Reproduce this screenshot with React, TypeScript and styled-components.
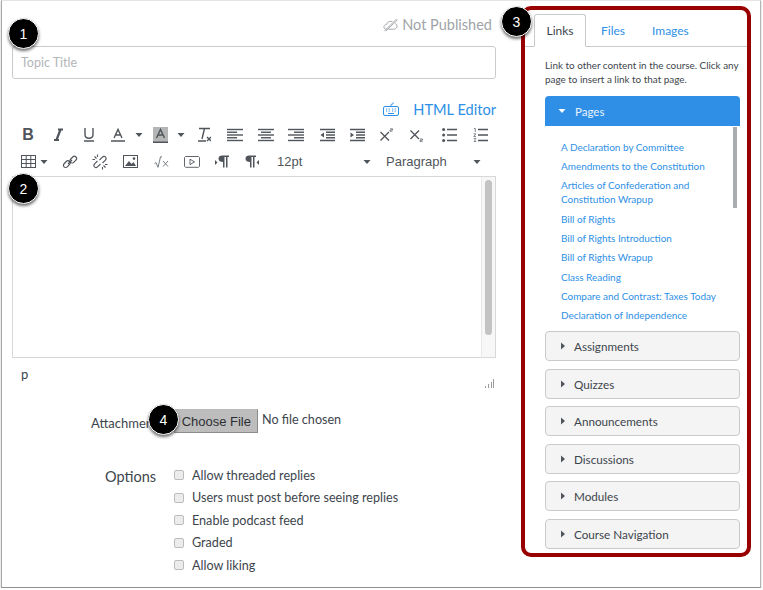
import React from 'react';
import styled, { createGlobalStyle } from 'styled-components';

const GlobalStyle = createGlobalStyle`
  html, body {
    margin: 0;
    padding: 0;
    background: #fff;
    font-family: Lato, "Open Sans", sans-serif;
  }
`;

const Shell = styled.div`
  position: relative;
  box-sizing: border-box;
  display: flex;
  width: 760px;
  height: 588px;
  margin-left: 1px;
  border-top: 1px solid #e4e4e4;
  border-left: 1px solid #a8a8a8;
  border-right: 1px solid #b4b4b4;
  border-bottom: 1px solid #8e8e8e;
  box-shadow: 0 1px 2px rgba(0, 0, 0, 0.25);
  overflow: hidden;
`;

const Main = styled.div`
  box-sizing: border-box;
  width: 494px;
  padding-left: 10px;
  margin-right: 25px;
  flex: none;
`;

const StatusRow = styled.div`
  display: flex;
  justify-content: flex-end;
  align-items: center;
  gap: 4px;
  height: 45px;
  padding: 2px 4px 0 0;
  box-sizing: border-box;
  color: #a0a4a8;
  font-size: 14.5px;
`;

const TitleInput = styled.div`
  box-sizing: border-box;
  height: 33px;
  padding: 0 8px;
  border: 1px solid #c8cbce;
  border-radius: 3px;
  display: flex;
  align-items: center;
  color: #b2b5b8;
  font-size: 12.5px;
`;

const EditorSwitch = styled.div`
  display: flex;
  justify-content: flex-end;
  align-items: center;
  gap: 14px;
  height: 42px;
  padding-top: 20px;
  padding-bottom: 2px;
  box-sizing: border-box;
  color: #2d8fe6;
  font-size: 14.6px;
`;

const ToolRow = styled.div`
  display: flex;
  align-items: center;
  height: 27px;
  padding-left: 1px;
  color: #50555b;
`;

const ToolCell = styled.div<{ $w: number }>`
  width: ${p => p.$w}px;
  flex: none;
  display: flex;
  justify-content: center;
  align-items: center;
  gap: 4px;
`;

const Select = styled.div<{ $w: number }>`
  width: ${p => p.$w}px;
  box-sizing: border-box;
  flex: none;
  display: flex;
  justify-content: space-between;
  align-items: center;
  padding: 0 4px 0 11px;
  color: #50555b;
  font-family: "Liberation Sans", Arial, sans-serif;
  font-size: 13px;
`;

const EditorBox = styled.div`
  box-sizing: border-box;
  display: flex;
  justify-content: flex-end;
  height: 182px;
  margin-top: 1px;
  border: 1px solid #d6d8da;
`;

const EditorTrack = styled.div`
  box-sizing: border-box;
  width: 14px;
  padding: 3px 3px 22px;
  background: #f7f7f7;
  border-left: 1px solid #e8e8e8;
`;

const EditorThumb = styled.div`
  height: 100%;
  border-radius: 4px;
  background: #c3c3c3;
`;

const PathRow = styled.div`
  display: flex;
  justify-content: space-between;
  align-items: flex-end;
  height: 31px;
  padding: 0 1px 0 9px;
  color: #3d454c;
  font-size: 13px;
`;

const PathText = styled.span`
  line-height: 16px;
  margin-bottom: 7px;
`;

const Grip = styled.svg`
  display: block;
  margin-bottom: 1px;
`;

const FieldRow = styled.div`
  display: flex;
  align-items: center;
  height: 24px;
  margin-top: 20px;
  padding-left: 79px;
  color: #3d454c;
`;

const FieldLabel = styled.span`
  width: 84px;
  flex: none;
  font-size: 13px;
  padding-top: 4px;
  white-space: nowrap;
`;

const FileButton = styled.button`
  box-sizing: border-box;
  width: 84px;
  height: 24px;
  flex: none;
  margin: 0 4px 0 -1px;
  padding: 0 6px 0 0;
  text-align: right;
  border: 1px solid #8c8c8c;
  border-top-color: #bbb;
  border-left-color: #bbb;
  background: #bdbdbd;
  color: #2c2f33;
  font-family: "Liberation Sans", Arial, sans-serif;
  font-size: 13px;
`;

const FileName = styled.span`
  color: #3d454c;
  font-size: 12.6px;
  margin-top: -3px;
`;

const OptionsRow = styled.div`
  display: flex;
  margin-top: 31px;
  padding-left: 93px;
  color: #3d454c;
`;

const OptionsLabel = styled.span`
  width: 69px;
  flex: none;
  font-size: 14.5px;
  line-height: 22px;
  padding-top: 2px;
`;

const OptionList = styled.div`
  display: flex;
  flex-direction: column;
`;

const OptionRow = styled.label`
  display: flex;
  align-items: center;
  gap: 8px;
  height: 22.5px;
  font-size: 12.6px;
`;

const Check = styled.input`
  appearance: none;
  box-sizing: border-box;
  width: 10px;
  height: 10px;
  margin: 0;
  background: #ececec;
  border: 1px solid #bcbcbc;
  border-radius: 2px;
`;

const Panel = styled.aside`
  box-sizing: border-box;
  width: 230px;
  height: 551px;
  margin-top: 5px;
  flex: none;
  padding-top: 4px;
  border: 4px solid #990000;
  border-radius: 10px;
  overflow: hidden;
`;

const Tabs = styled.div`
  display: flex;
  height: 33px;
  box-sizing: border-box;
  padding-left: 9px;
  border-bottom: 1px solid #c8cbce;
`;

const Tab = styled.div<{ $active?: boolean }>`
  box-sizing: border-box;
  width: ${p => (p.$active ? '52px' : 'auto')};
  height: ${p => (p.$active ? '33px' : '32px')};
  margin-right: ${p => (p.$active ? '15px' : '27px')};
  display: flex;
  align-items: center;
  justify-content: center;
  font-size: 12px;
  background: #fff;
  color: ${p => (p.$active ? '#3d454c' : '#2d8fe6')};
  border: ${p => (p.$active ? '1px solid #c8cbce' : 'none')};
  border-bottom: ${p => (p.$active ? '1px solid #fff' : 'none')};
  border-radius: 3px 3px 0 0;
`;

const PanelBody = styled.div`
  padding: 0 7px 0 20px;
`;

const Hint = styled.p`
  margin: 11px 0 10px;
  color: #3d454c;
  font-size: 9.9px;
  line-height: 14px;
  white-space: nowrap;
`;

const OpenHeader = styled.div`
  box-sizing: border-box;
  display: flex;
  align-items: center;
  gap: 9px;
  height: 30px;
  padding-left: 13px;
  border-radius: 4px 4px 0 0;
  background: #2f8fe6;
  color: #e8f3fd;
  font-size: 11.5px;
`;

const LinkArea = styled.div`
  position: relative;
  height: 200px;
  padding: 13.7px 0 0 16px;
  box-sizing: border-box;
`;

const LinkItem = styled.div`
  color: #2d8fe6;
  font-size: 9.95px;
  line-height: 14px;
  margin-bottom: 5.35px;
  white-space: pre-line;
`;

const ListThumb = styled.div`
  position: absolute;
  top: 1px;
  right: 3px;
  width: 4px;
  height: 81px;
  background: #a9adb1;
`;

const Accordion = styled.div`
  display: flex;
  flex-direction: column;
  gap: 7.6px;
  margin-top: 5px;
`;

const AccordionRow = styled.div`
  box-sizing: border-box;
  display: flex;
  align-items: center;
  gap: 7px;
  height: 30px;
  padding-left: 13px;
  background: #f4f4f4;
  border: 1px solid #c8cbce;
  border-radius: 4px;
  color: #3d454c;
  font-size: 11.7px;
`;

const Badge = styled.div<{ $x: number; $y: number }>`
  position: absolute;
  left: ${p => p.$x}px;
  top: ${p => p.$y}px;
  box-sizing: border-box;
  width: 31px;
  height: 31px;
  display: flex;
  align-items: center;
  justify-content: center;
  border-radius: 50%;
  background: #000;
  border: 1px solid #fff;
  box-shadow: 0 2px 3px rgba(0, 0, 0, 0.55);
  color: #fff;
  font-family: "Liberation Sans", Arial, sans-serif;
  font-size: 14px;
`;

const Bold = styled.span`
  font-family: "Liberation Sans", Arial, sans-serif;
  font-weight: 700;
  font-size: 16px;
  line-height: 16px;
`;

const Caret = ({ dir = 'down', color = '#50555b' }: { dir?: 'down' | 'right'; color?: string }) => (
  <svg width="8" height="8" viewBox="0 0 8 8">
    {dir === 'down' ? <path d="M0.5 2h7L4 6z" fill={color} /> : <path d="M2 0.5v7L6 4z" fill={color} />}
  </svg>
);

const Lines = ({ rows }: { rows: [number, number][] }) => (
  <svg width="16" height="14" viewBox="0 0 16 14" stroke="#50555b" strokeWidth="1.4">
    {rows.map(([a, b], i) => (
      <path key={i} d={`M${a} ${1.5 + i * 2.75}H${b}`} />
    ))}
  </svg>
);

const CloudOff = () => (
  <svg width="15" height="14" viewBox="0 0 16 14" fill="none" stroke="#a0a4a8" strokeWidth="1">
    <path d="M4 11.5C1.5 11.5 0.7 9.6 1 8.4 1.4 7 2.6 6.4 3.6 6.6 4.4 3.6 7.6 2.4 10 3.4M13 5.4c1.8 0.8 2.4 2.4 1.8 3.8-0.5 1.4-1.8 2.3-3.3 2.3H6" />
    <path d="M1.5 13.5L14.5 0.5M3 13.5L15.5 1.5" />
  </svg>
);

const KeyboardIcon = () => (
  <svg width="16" height="14" viewBox="0 0 16 14" fill="none" stroke="#2d8fe6" strokeWidth="1">
    <rect x="0.5" y="4.5" width="15" height="9" rx="1.5" />
    <path d="M8 4.5V3c0-1 1.5-0.8 2-1.2s0.2-1.3 0.2-1.3" />
    <path d="M3 7h1.2M5.6 7h1.2M9 7h1.2M11.6 7h1.2M3 9h1.2M5.6 9h1.2M9 9h1.2M11.6 9h1.2M5 11.5h6" />
  </svg>
);

const TableIcon = () => (
  <svg width="15" height="13" viewBox="0 0 15 13" fill="none" stroke="#50555b" strokeWidth="1">
    <rect x="0.5" y="0.5" width="14" height="12" />
    <path d="M0.5 4.5h14M0.5 8.5h14M5.2 0.5v12M9.8 0.5v12" />
  </svg>
);

const LinkIcon = () => (
  <svg width="16" height="16" viewBox="0 0 16 16" fill="none" stroke="#50555b" strokeWidth="1.2">
    <rect x="1" y="8" width="7.5" height="4.4" rx="2.2" transform="rotate(-45 4.7 10.2)" />
    <rect x="7.5" y="3.5" width="7.5" height="4.4" rx="2.2" transform="rotate(-45 11.2 5.7)" />
    <path d="M6 10l4-4" />
  </svg>
);

const UnlinkIcon = () => (
  <svg width="16" height="16" viewBox="0 0 16 16" fill="none" stroke="#50555b" strokeWidth="1.1">
    <path d="M5.5 7L2.8 9.7c-1.1 1.1-1.1 2.4-0.3 3.3s2.2 0.8 3.3-0.3L8.5 10M10.5 9l2.7-2.7c1.1-1.1 1.1-2.4 0.3-3.3s-2.2-0.8-3.3 0.3L7.5 6" />
    <path d="M2.5 2.5l2 2M0.5 5.5h2.5M5.5 0.5V3M13.5 13.5l-2-2M15.5 10.5H13M10.5 15.5V13" />
  </svg>
);

const ImageIcon = () => (
  <svg width="15" height="13" viewBox="0 0 15 13">
    <rect x="0.5" y="0.5" width="14" height="12" fill="#fff" stroke="#50555b" />
    <path d="M2 11l4-5 2.5 3 2-2 2.5 4z" fill="#50555b" />
    <circle cx="11" cy="3.6" r="1.3" fill="#50555b" />
  </svg>
);

const SqrtIcon = () => (
  <svg width="15" height="12" viewBox="0 0 15 12" fill="none" stroke="#6a6f75" strokeWidth="0.9">
    <path d="M0.5 7.5l1.5-0.8 2 4.6L6.5 0.8H8" />
    <path d="M9 5l5 5.5M14 5l-5 5.5" />
  </svg>
);

const MediaIcon = () => (
  <svg width="16" height="12" viewBox="0 0 16 12" fill="none" stroke="#50555b" strokeWidth="0.9">
    <path d="M1.5 0.5h13l1 1v8.8l-1 1h-13l-1-1V1.5z" />
    <path d="M6 3.2l4.5 2.7L6 8.6z" />
  </svg>
);

const ParaIcon = ({ rtl }: { rtl?: boolean }) => (
  <svg width="14" height="13" viewBox="0 0 14 13" fill="#50555b">
    <path
      d={
        rtl
          ? 'M4 0.5h7v1.5H9.5V12.5H8V2H6.5V12.5H5V7C2.5 7 0.5 6 0.5 3.8S2 0.5 4 0.5z'
          : 'M7 0.5h7v1.5h-1.5V12.5H11V2H9.5V12.5H8V7C5.5 7 3.5 6 3.5 3.8S5 0.5 7 0.5z'
      }
    />
    <path d={rtl ? 'M14 5v5l-2.5-2.5z' : 'M0 5v5l2.5-2.5z'} />
  </svg>
);

const ScriptIcon = ({ sub }: { sub?: boolean }) => (
  <svg width="14" height="14" viewBox="0 0 14 14" fill="none" stroke="#50555b" strokeWidth="1.3">
    <path d={sub ? 'M0.5 2.5l8.5 8.5M9 2.5L0.5 11' : 'M0.5 4l8.5 8.5M9 4L0.5 12.5'} />
    <path d={sub ? 'M10 11h2.5v1.2H10v1.2h2.5' : 'M10 0.8h2.5V2H10v1.2h2.5'} strokeWidth="0.7" />
  </svg>
);

const ListIcon = ({ numbered }: { numbered?: boolean }) => (
  <svg width="15" height="14" viewBox="0 0 15 14" fill="#50555b">
    <path d="M5 1.5h10M5 7h10M5 12.5h10" stroke="#50555b" strokeWidth="1.3" />
    {numbered ? (
      <path d="M1 0.5h1.3v3.5M0.6 5.8h2.2L0.8 8.6h2.2M0.8 10.5h2L1.6 12l1.2 1.5H0.8" fill="none" stroke="#50555b" strokeWidth="0.7" />
    ) : (
      <>
        <circle cx="1.6" cy="1.5" r="1.5" />
        <circle cx="1.6" cy="7" r="1.5" />
        <circle cx="1.6" cy="12.5" r="1.5" />
      </>
    )}
  </svg>
);

const Glyph = ({ d, w = 14, h = 15, back, weight = 1.4 }: { d: string; w?: number; h?: number; back?: boolean; weight?: number }) => (
  <svg width={w} height={h} viewBox={`0 0 ${w} ${h}`}>
    {back && <rect width={w} height={h} fill="#b5b5b5" />}
    <path d={d} fill="none" stroke="#50555b" strokeWidth={weight} />
  </svg>
);

const OutdentIcon = ({ flip }: { flip?: boolean }) => (
  <svg width="15" height="14" viewBox="0 0 15 14" stroke="#50555b" strokeWidth="1.4" fill="#50555b">
    <path d="M0 1.5h15M6 4.3h9M6 7h9M6 9.7h9M0 12.5h15" />
    <path d={flip ? 'M0.5 4.5v5L4 7z' : 'M4 4.5v5L0.5 7z'} stroke="none" />
  </svg>
);

const links = [
  'A Declaration by Committee',
  'Amendments to the Constitution',
  'Articles of Confederation and\nConstitution Wrapup',
  'Bill of Rights',
  'Bill of Rights Introduction',
  'Bill of Rights Wrapup',
  'Class Reading',
  'Compare and Contrast: Taxes Today',
  'Declaration of Independence',
];

const sections = ['Assignments', 'Quizzes', 'Announcements', 'Discussions', 'Modules', 'Course Navigation'];

const options = [
  'Allow threaded replies',
  'Users must post before seeing replies',
  'Enable podcast feed',
  'Graded',
  'Allow liking',
];

export default function App() {
  return (
    <>
      <GlobalStyle />
      <Shell>
        <Main>
          <StatusRow>
            <CloudOff />
            Not Published
          </StatusRow>
          <TitleInput>Topic Title</TitleInput>
          <EditorSwitch>
            <KeyboardIcon />
            HTML Editor
          </EditorSwitch>
          <ToolRow>
            <ToolCell $w={30}><Bold>B</Bold></ToolCell>
            <ToolCell $w={30}><Glyph weight={2.2} d="M7 2.5h5M3 13h5M9.5 2.5L5.5 13" /></ToolCell>
            <ToolCell $w={31}><Glyph d="M3 1v6.5c0 5 8 5 8 0V1M2 14h10" /></ToolCell>
            <ToolCell $w={27}><Glyph d="M3 11L7 2.5 11 11M4.4 8h5.2M0 14h14" /></ToolCell>
            <ToolCell $w={16}><Caret /></ToolCell>
            <ToolCell $w={26}><Glyph w={15} h={16} back d="M3.5 11L7.5 2.5 11.5 11M4.9 8h5.2M0 15.2h15" /></ToolCell>
            <ToolCell $w={16}><Caret /></ToolCell>
            <ToolCell $w={30}><Glyph d="M2 1.5h11M7.5 1.5L5 12M1 14h8M10 10l4 4M14 10l-4 4" /></ToolCell>
            <ToolCell $w={32}><Lines rows={[[0, 16], [0, 10], [0, 16], [0, 10], [0, 16]]} /></ToolCell>
            <ToolCell $w={30}><Lines rows={[[0, 16], [3, 13], [0, 16], [3, 13], [0, 16]]} /></ToolCell>
            <ToolCell $w={30}><Lines rows={[[0, 16], [6, 16], [0, 16], [6, 16], [0, 16]]} /></ToolCell>
            <ToolCell $w={32}><OutdentIcon /></ToolCell>
            <ToolCell $w={28}><OutdentIcon flip /></ToolCell>
            <ToolCell $w={32}><ScriptIcon /></ToolCell>
            <ToolCell $w={28}><ScriptIcon sub /></ToolCell>
            <ToolCell $w={36}><ListIcon /></ToolCell>
            <ToolCell $w={26}><ListIcon numbered /></ToolCell>
          </ToolRow>
          <ToolRow>
            <ToolCell $w={43}><TableIcon /><Caret /></ToolCell>
            <ToolCell $w={28}><LinkIcon /></ToolCell>
            <ToolCell $w={32}><UnlinkIcon /></ToolCell>
            <ToolCell $w={28}><ImageIcon /></ToolCell>
            <ToolCell $w={34}><SqrtIcon /></ToolCell>
            <ToolCell $w={28}><MediaIcon /></ToolCell>
            <ToolCell $w={32}><ParaIcon /></ToolCell>
            <ToolCell $w={28}><ParaIcon rtl /></ToolCell>
            <Select $w={109}>12pt<Caret /></Select>
            <Select $w={110}>Paragraph<Caret /></Select>
          </ToolRow>
          <EditorBox>
            <EditorTrack><EditorThumb /></EditorTrack>
          </EditorBox>
          <PathRow>
            <PathText>p</PathText>
            <Grip width="10" height="9" viewBox="0 0 10 9" fill="#9a9a9a">
              <path d="M0 7h1v2H0zM3 5h1v4H3zM6 3h1v6H6zM8 0h1v9H8z" />
            </Grip>
          </PathRow>
          <FieldRow>
            <FieldLabel>Attachment</FieldLabel>
            <FileButton type="button">Choose File</FileButton>
            <FileName>No file chosen</FileName>
          </FieldRow>
          <OptionsRow>
            <OptionsLabel>Options</OptionsLabel>
            <OptionList>
              {options.map(o => (
                <OptionRow key={o}>
                  <Check type="checkbox" />
                  {o}
                </OptionRow>
              ))}
            </OptionList>
          </OptionsRow>
        </Main>
        <Panel>
          <Tabs>
            <Tab $active>Links</Tab>
            <Tab>Files</Tab>
            <Tab>Images</Tab>
          </Tabs>
          <PanelBody>
            <Hint>
              Link to other content in the course. Click any
              <br />
              page to insert a link to that page.
            </Hint>
            <OpenHeader>
              <Caret color="#fff" />
              Pages
            </OpenHeader>
            <LinkArea>
              <ListThumb />
              {links.map(l => (
                <LinkItem key={l}>{l}</LinkItem>
              ))}
            </LinkArea>
            <Accordion>
              {sections.map(s => (
                <AccordionRow key={s}>
                  <Caret dir="right" />
                  {s}
                </AccordionRow>
              ))}
            </Accordion>
          </PanelBody>
        </Panel>
        <Badge $x={6} $y={17}>1</Badge>
        <Badge $x={6} $y={172}>2</Badge>
        <Badge $x={499} $y={5}>3</Badge>
        <Badge $x={146} $y={403}>4</Badge>
      </Shell>
    </>
  );
}
